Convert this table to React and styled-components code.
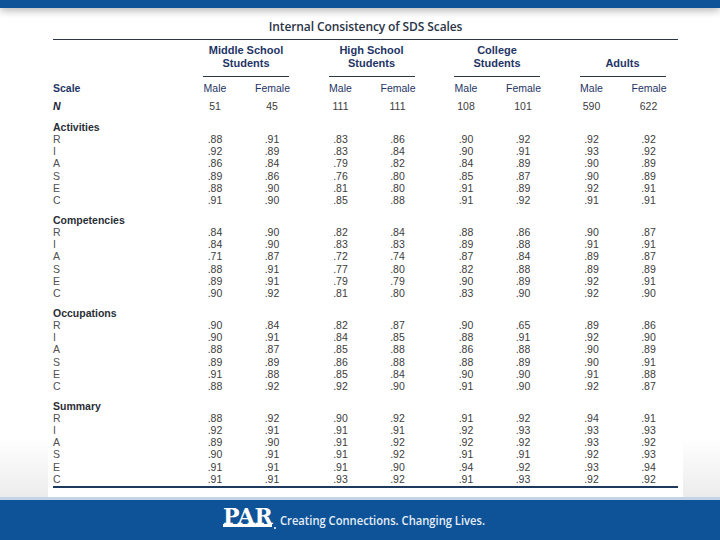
import React from "react";
import styled, { createGlobalStyle } from "styled-components";

const GlobalStyle = createGlobalStyle`
  html, body { margin: 0; padding: 0; background: #ffffff; }
  body { font-family: "Liberation Sans", Arial, sans-serif; }
  * { box-sizing: border-box; }
`;

const BLUE = "#0e5397";
const NAVY = "#1f3566";

const Page = styled.div`
  width: 720px;
  height: 540px;
  display: flex;
  flex-direction: column;
  overflow: hidden;
  background: #f1f1f1;
`;

const TopBar = styled.div`
  height: 8px;
  flex: none;
  background: ${BLUE};
  box-shadow: 0 2px 8px rgba(0, 0, 0, 0.35);
  position: relative;
  z-index: 2;
`;

const Main = styled.div`
  flex: 1;
  display: flex;
  padding: 0 37px 0 48px;
  background: linear-gradient(to bottom, #ffffff 88%, #ececec 100%);
`;

const Card = styled.div`
  flex: 1;
  background: #ffffff;
  padding: 0 5px;
  position: relative;
  z-index: 1;
`;

const Title = styled.div`
  padding-top: 11px;
  height: 31px;
  line-height: 16px;
  text-align: center;
  font-family: "Open Sans", sans-serif;
  font-size: 12px;
  font-weight: 600;
  color: #2a3446;
  letter-spacing: -0.1px;
`;

const Rule = styled.div`
  height: ${(p) => p.$h || 1}px;
  background: ${(p) => p.$color || "#2c3644"};
  margin-top: ${(p) => p.$mt || 0}px;
`;

const Row = styled.div`
  display: flex;
  align-items: center;
  height: ${(p) => p.$h || 12.2}px;
  margin-top: ${(p) => p.$mt || 0}px;
  font-size: 10.5px;
  line-height: 12px;
`;

const Label = styled.div`
  width: 150px;
  flex: none;
  color: ${(p) => p.$color || "#505050"};
  font-weight: ${(p) => p.$weight || 400};
  font-style: ${(p) => (p.$italic ? "italic" : "normal")};
  white-space: nowrap;
`;

const Groups = styled.div`
  display: flex;
  gap: 39.5px;
`;

const Group = styled.div`
  width: 86px;
  display: flex;
  justify-content: space-between;
  align-items: flex-start;
`;

const GroupHead = styled.div`
  width: 86px;
  display: flex;
  flex-direction: column;
`;

const GroupTitle = styled.div`
  height: 26px;
  display: flex;
  flex-direction: column;
  justify-content: flex-end;
  text-align: center;
  font-size: 11px;
  line-height: 13px;
  font-weight: 700;
  color: ${NAVY};
`;

const GroupLine = styled.div`
  margin-top: 6px;
  height: 1px;
  background: #2c3644;
`;

const Cell = styled.div`
  width: ${(p) => (p.$wide ? 34 : 24)}px;
  text-align: center;
  color: ${(p) => p.$color || "#3c3c3c"};
  white-space: nowrap;
`;

const HeaderRow = styled.div`
  display: flex;
  padding-top: 4px;
`;

const Spacer = styled.div`
  width: 150px;
  flex: none;
`;

const Footer = styled.div`
  height: 43px;
  flex: none;
  background: ${BLUE};
  border-top: 3px solid #c3d4e8;
  display: flex;
  align-items: flex-start;
  padding: 8.5px 0 0 223px;
  gap: 8px;
  position: relative;
  z-index: 0;
`;

const Logo = styled.div`
  position: relative;
  display: flex;
  flex-direction: column;
  align-items: stretch;
`;

const LogoText = styled.span`
  font-family: "DejaVu Serif", "Liberation Serif", serif;
  font-weight: 700;
  font-size: 22px;
  line-height: 15px;
  letter-spacing: -0.3px;
  color: #ffffff;
`;

const LogoBar = styled.div`
  height: 3px;
  margin-top: 0.5px;
  background: #ffffff;
`;

const LogoMark = styled.span`
  position: absolute;
  right: -4px;
  bottom: -2px;
  width: 2.5px;
  height: 2.5px;
  border-radius: 50%;
  background: #ffffff;
`;

const Tagline = styled.span`
  font-family: "Open Sans", sans-serif;
  font-weight: 600;
  font-size: 13px;
  line-height: 16px;
  color: #e4edf7;
  display: inline-block;
  transform: scaleX(0.86);
  transform-origin: left center;
  white-space: nowrap;
  margin-top: 3.5px;
`;

const groups = [
  ["Middle School", "Students"],
  ["High School", "Students"],
  ["College", "Students"],
  ["Adults"],
];

const nValues = ["51", "45", "111", "111", "108", "101", "590", "622"];

const sections = [
  {
    name: "Activities",
    rows: [
      ["R", ".88 .91 .83 .86 .90 .92 .92 .92"],
      ["I", ".92 .89 .83 .84 .90 .91 .93 .92"],
      ["A", ".86 .84 .79 .82 .84 .89 .90 .89"],
      ["S", ".89 .86 .76 .80 .85 .87 .90 .89"],
      ["E", ".88 .90 .81 .80 .91 .89 .92 .91"],
      ["C", ".91 .90 .85 .88 .91 .92 .91 .91"],
    ],
  },
  {
    name: "Competencies",
    rows: [
      ["R", ".84 .90 .82 .84 .88 .86 .90 .87"],
      ["I", ".84 .90 .83 .83 .89 .88 .91 .91"],
      ["A", ".71 .87 .72 .74 .87 .84 .89 .87"],
      ["S", ".88 .91 .77 .80 .82 .88 .89 .89"],
      ["E", ".89 .91 .79 .79 .90 .89 .92 .91"],
      ["C", ".90 .92 .81 .80 .83 .90 .92 .90"],
    ],
  },
  {
    name: "Occupations",
    rows: [
      ["R", ".90 .84 .82 .87 .90 .65 .89 .86"],
      ["I", ".90 .91 .84 .85 .88 .91 .92 .90"],
      ["A", ".88 .87 .85 .88 .86 .88 .90 .89"],
      ["S", ".89 .89 .86 .88 .88 .89 .90 .91"],
      ["E", ".91 .88 .85 .84 .90 .90 .91 .88"],
      ["C", ".88 .92 .92 .90 .91 .90 .92 .87"],
    ],
  },
  {
    name: "Summary",
    rows: [
      ["R", ".88 .92 .90 .92 .91 .92 .94 .91"],
      ["I", ".92 .91 .91 .91 .92 .93 .93 .93"],
      ["A", ".89 .90 .91 .92 .92 .92 .93 .92"],
      ["S", ".90 .91 .91 .92 .91 .91 .92 .93"],
      ["E", ".91 .91 .91 .90 .94 .92 .93 .94"],
      ["C", ".91 .91 .93 .92 .91 .93 .92 .92"],
    ],
  },
];

function DataCells({ values, color }) {
  const pairs = [0, 1, 2, 3].map((g) => [values[g * 2], values[g * 2 + 1]]);
  return (
    <Groups>
      {pairs.map(([m, f], i) => (
        <Group key={i}>
          <Cell $color={color}>{m}</Cell>
          <Cell $wide $color={color}>{f}</Cell>
        </Group>
      ))}
    </Groups>
  );
}

export default function App() {
  return (
    <Page>
      <GlobalStyle />
      <TopBar />
      <Main>
        <Card>
          <Title>Internal Consistency of SDS Scales</Title>
          <Rule />
          <HeaderRow>
            <Spacer />
            <Groups>
              {groups.map((lines, i) => (
                <GroupHead key={i}>
                  <GroupTitle>
                    {lines.map((l) => (
                      <span key={l}>{l}</span>
                    ))}
                  </GroupTitle>
                  <GroupLine />
                </GroupHead>
              ))}
            </Groups>
          </HeaderRow>
          <Row $h={12} $mt={5}>
            <Label $weight={700} $color={NAVY}>Scale</Label>
            <DataCells
              color={NAVY}
              values={["Male", "Female", "Male", "Female", "Male", "Female", "Male", "Female"]}
            />
          </Row>
          <Row $h={12} $mt={6}>
            <Label $weight={700} $italic $color="#1c2233">N</Label>
            <DataCells values={nValues} />
          </Row>
          {sections.map((s, si) => (
            <React.Fragment key={s.name}>
              <Row $h={12} $mt={si === 0 ? 9 : 7.8}>
                <Label $weight={700} $color="#2a2e36">{s.name}</Label>
              </Row>
              {s.rows.map(([k, vals]) => (
                <Row key={k}>
                  <Label>{k}</Label>
                  <DataCells values={vals.split(" ")} />
                </Row>
              ))}
            </React.Fragment>
          ))}
          <Rule $h={2} $color="#1d3a5e" $mt={1} />
        </Card>
      </Main>
      <Footer>
        <Logo>
          <LogoText>PAR</LogoText>
          <LogoBar />
          <LogoMark />
        </Logo>
        <Tagline>Creating Connections. Changing Lives.</Tagline>
      </Footer>
    </Page>
  );
}
